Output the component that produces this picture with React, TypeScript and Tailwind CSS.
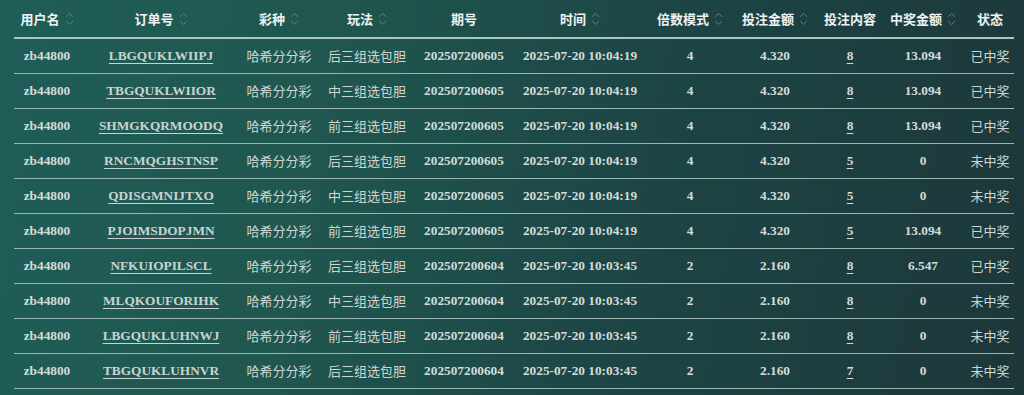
import React from "react";

type Row = {
  user: string;
  order: string;
  lottery: string;
  play: string;
  issue: string;
  time: string;
  multiple: number;
  amount: string;
  content: number;
  prize: string;
  status: string;
};

const rows: Row[] = [
  { user: "zb44800", order: "LBGQUKLWIIPJ", lottery: "哈希分分彩", play: "后三组选包胆", issue: "202507200605", time: "2025-07-20 10:04:19", multiple: 4, amount: "4.320", content: 8, prize: "13.094", status: "已中奖" },
  { user: "zb44800", order: "TBGQUKLWIIOR", lottery: "哈希分分彩", play: "中三组选包胆", issue: "202507200605", time: "2025-07-20 10:04:19", multiple: 4, amount: "4.320", content: 8, prize: "13.094", status: "已中奖" },
  { user: "zb44800", order: "SHMGKQRMOODQ", lottery: "哈希分分彩", play: "前三组选包胆", issue: "202507200605", time: "2025-07-20 10:04:19", multiple: 4, amount: "4.320", content: 8, prize: "13.094", status: "已中奖" },
  { user: "zb44800", order: "RNCMQGHSTNSP", lottery: "哈希分分彩", play: "后三组选包胆", issue: "202507200605", time: "2025-07-20 10:04:19", multiple: 4, amount: "4.320", content: 5, prize: "0", status: "未中奖" },
  { user: "zb44800", order: "QDISGMNIJTXO", lottery: "哈希分分彩", play: "中三组选包胆", issue: "202507200605", time: "2025-07-20 10:04:19", multiple: 4, amount: "4.320", content: 5, prize: "0", status: "未中奖" },
  { user: "zb44800", order: "PJOIMSDOPJMN", lottery: "哈希分分彩", play: "前三组选包胆", issue: "202507200605", time: "2025-07-20 10:04:19", multiple: 4, amount: "4.320", content: 5, prize: "13.094", status: "已中奖" },
  { user: "zb44800", order: "NFKUIOPILSCL", lottery: "哈希分分彩", play: "后三组选包胆", issue: "202507200604", time: "2025-07-20 10:03:45", multiple: 2, amount: "2.160", content: 8, prize: "6.547", status: "已中奖" },
  { user: "zb44800", order: "MLQKOUFORIHK", lottery: "哈希分分彩", play: "中三组选包胆", issue: "202507200604", time: "2025-07-20 10:03:45", multiple: 2, amount: "2.160", content: 8, prize: "0", status: "未中奖" },
  { user: "zb44800", order: "LBGQUKLUHNWJ", lottery: "哈希分分彩", play: "前三组选包胆", issue: "202507200604", time: "2025-07-20 10:03:45", multiple: 2, amount: "2.160", content: 8, prize: "0", status: "未中奖" },
  { user: "zb44800", order: "TBGQUKLUHNVR", lottery: "哈希分分彩", play: "后三组选包胆", issue: "202507200604", time: "2025-07-20 10:03:45", multiple: 2, amount: "2.160", content: 7, prize: "0", status: "未中奖" },
];

const headers: { label: string; sort: boolean }[] = [
  { label: "用户名", sort: true },
  { label: "订单号", sort: true },
  { label: "彩种", sort: true },
  { label: "玩法", sort: true },
  { label: "期号", sort: false },
  { label: "时间", sort: true },
  { label: "倍数模式", sort: true },
  { label: "投注金额", sort: true },
  { label: "投注内容", sort: false },
  { label: "中奖金额", sort: true },
  { label: "状态", sort: false },
];

const cols =
  "grid grid-cols-[66px_162px_74px_102px_92px_140px_80px_90px_60px_86px_48px] items-center";

const serif = "font-['Liberation_Serif','Times_New_Roman',serif] font-bold text-[13.3px] text-[#d3dcd9]";
const cjk = "font-['Noto_Sans_CJK_SC','Noto_Sans',sans-serif] text-[13px] text-[#cdd6d3]";

function SortIcon() {
  return (
    <svg width="9" height="16" viewBox="0 0 9 16" fill="none" className="ml-[5px] shrink-0">
      <path d="M1.5 5.5 L4.5 2.5 L7.5 5.5" stroke="#5f827d" strokeWidth="1" strokeLinecap="round" strokeLinejoin="round" />
      <path d="M1.5 10.5 L4.5 13.5 L7.5 10.5" stroke="#5f827d" strokeWidth="1" strokeLinecap="round" strokeLinejoin="round" />
    </svg>
  );
}

export default function App() {
  return (
    <div className="w-[1024px] h-[395px] overflow-hidden bg-[linear-gradient(100deg,#1f5d58_0%,#20574f_30%,#1d4646_60%,#1d373a_100%)]">
      <div className="w-[1000px] ml-[14px]">
        {/* header */}
        <div className={`${cols} h-[39px] border-b-2 border-[#a9c6c2]`}>
          {headers.map((h) => (
            <div
              key={h.label}
              className="flex items-center justify-center whitespace-nowrap font-['Noto_Sans_CJK_SC','Noto_Sans',sans-serif] font-semibold text-[13px] text-[#eef3f2]"
            >
              {h.label}
              {h.sort && <SortIcon />}
            </div>
          ))}
        </div>

        {/* rows */}
        {rows.map((r) => (
          <div key={r.order} className={`${cols} h-[35px] border-b border-[#98b6b2] text-center whitespace-nowrap`}>
            <div className={serif}>{r.user}</div>
            <div className={serif}>
              <span className="underline underline-offset-[3px] decoration-1 text-[#c9d3d0] cursor-pointer">{r.order}</span>
            </div>
            <div className={cjk}>{r.lottery}</div>
            <div className={cjk}>{r.play}</div>
            <div className={serif}>{r.issue}</div>
            <div className={serif}>{r.time}</div>
            <div className={serif}>{r.multiple}</div>
            <div className={serif}>{r.amount}</div>
            <div className={serif}>
              <span className="underline underline-offset-[3px] decoration-1 cursor-pointer">{r.content}</span>
            </div>
            <div className={serif}>{r.prize}</div>
            <div className={cjk}>{r.status}</div>
          </div>
        ))}
      </div>
    </div>
  );
}
